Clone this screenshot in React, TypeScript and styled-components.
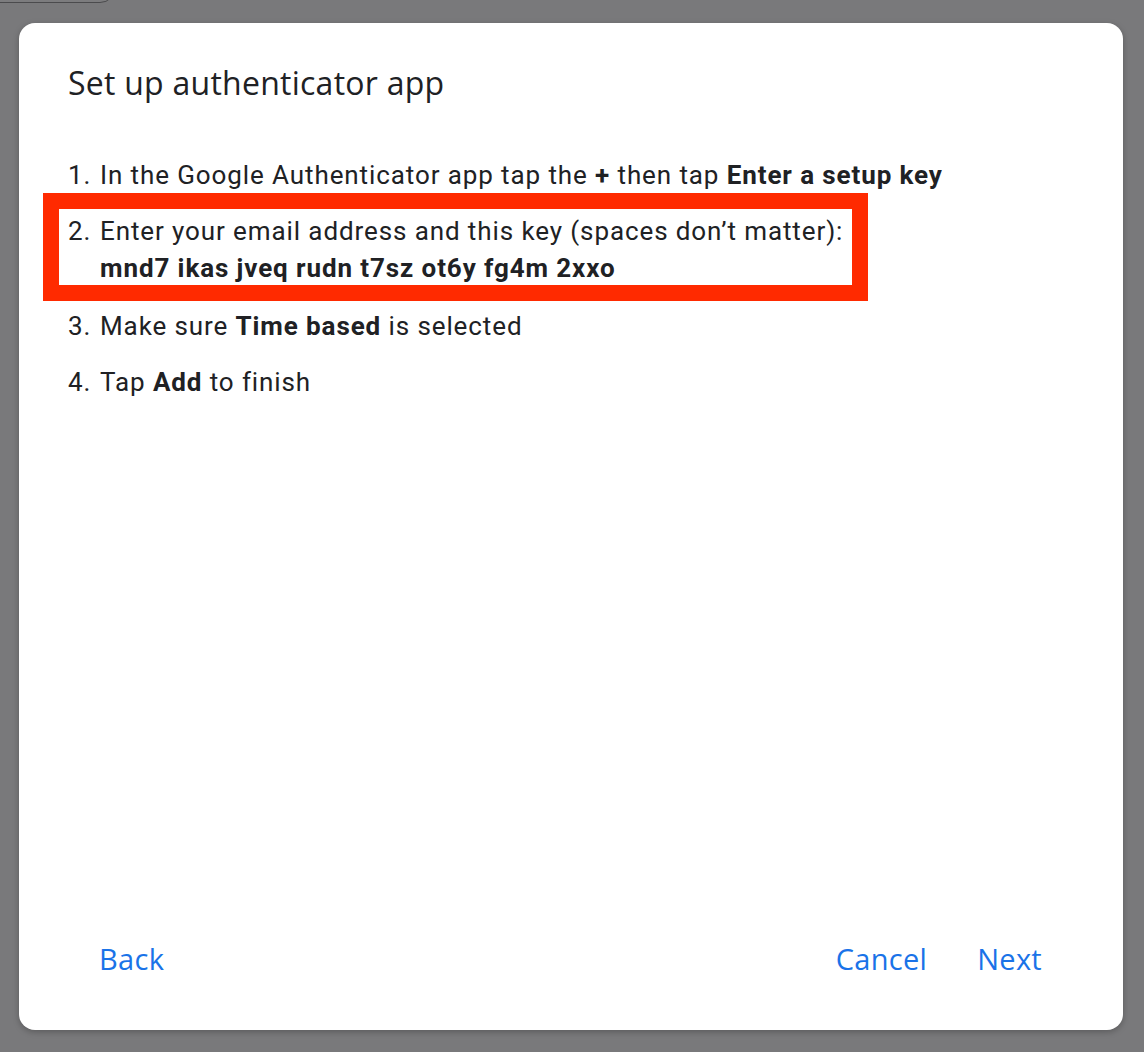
import React from "react";
import styled, { createGlobalStyle } from "styled-components";

const Global = createGlobalStyle`
  html, body { margin: 0; padding: 0; background: #79797b; }
  body { font-family: Roboto, "Liberation Sans", sans-serif; }
  * { box-sizing: border-box; }
`;

const Page = styled.div`
  position: relative;
  width: 1144px;
  height: 1052px;
  padding: 23px 21px 22px 19px;
  overflow: hidden;
`;

const BehindField = styled.div`
  position: absolute;
  left: -20px;
  top: -40px;
  width: 136px;
  height: 43px;
  border: 1.5px solid #4b4b4d;
  border-radius: 0 0 16px 16px;
  background: #7c7c7e;
`;

const Dialog = styled.div`
  position: relative;
  height: 1007px;
  background: #ffffff;
  border-radius: 16px;
  box-shadow: 0 2px 6px rgba(0, 0, 0, 0.25);
  display: flex;
  flex-direction: column;
  padding: 40px 0 48px 49px;
`;

const Title = styled.h1`
  margin: 0;
  font-family: "Open Sans", "Liberation Sans", sans-serif;
  font-weight: 400;
  font-size: 32px;
  letter-spacing: 0.25px;
  line-height: 40px;
  color: #202124;
`;

const Steps = styled.ol`
  list-style: none;
  margin: 54px 0 0 0;
  padding: 0;
  flex: 1;
  display: flex;
  flex-direction: column;
  color: #202124;
  font-size: 26px;
  letter-spacing: 0.9px;
  line-height: 36px;
`;

const Step = styled.li<{ $after?: number }>`
  display: flex;
  margin-bottom: ${(p) => p.$after ?? 20}px;
`;

const Num = styled.span`
  width: 32px;
  flex: none;
`;

const Body = styled.div`
  display: flex;
  flex-direction: column;
`;

const Highlight = styled.div`
  width: 825px;
  margin-left: -25px;
  margin-bottom: 7px;
  border: 16px solid #ff2a00;
  padding: 4px 0 0 9px;
`;

const Key = styled.b`
  font-weight: 700;
  margin-top: 2px;
  line-height: 34px;
`;

const Footer = styled.div`
  display: flex;
  align-items: center;
  padding: 0 65px 0 15px;
`;

const TextButton = styled.button`
  border: none;
  background: none;
  height: 48px;
  padding: 0 16px;
  font-family: "Open Sans", "Liberation Sans", sans-serif;
  font-weight: 500;
  font-size: 29px;
  letter-spacing: 0.3px;
  color: #1a73e8;
  cursor: pointer;
`;

const Spacer = styled.div`
  flex: 1;
`;

const ButtonGroup = styled.div`
  display: flex;
  gap: 18px;
`;

export default function App() {
  return (
    <>
      <Global />
      <Page>
        <BehindField />
        <Dialog>
          <Title>Set up authenticator app</Title>
          <Steps>
            <Step $after={0}>
              <Num>1.</Num>
              <span>
                In the Google Authenticator app tap the <b>+</b> then tap <b>Enter a setup key</b>
              </span>
            </Step>
            <Highlight>
              <Step $after={0}>
                <Num>2.</Num>
                <Body>
                  <span>Enter your email address and this key (spaces don’t matter):</span>
                  <Key>mnd7 ikas jveq rudn t7sz ot6y fg4m 2xxo</Key>
                </Body>
              </Step>
            </Highlight>
            <Step>
              <Num>3.</Num>
              <span>
                Make sure <b>Time based</b> is selected
              </span>
            </Step>
            <Step>
              <Num>4.</Num>
              <span>
                Tap <b>Add</b> to finish
              </span>
            </Step>
          </Steps>
          <Footer>
            <TextButton>Back</TextButton>
            <Spacer />
            <ButtonGroup>
              <TextButton>Cancel</TextButton>
              <TextButton>Next</TextButton>
            </ButtonGroup>
          </Footer>
        </Dialog>
      </Page>
    </>
  );
}
